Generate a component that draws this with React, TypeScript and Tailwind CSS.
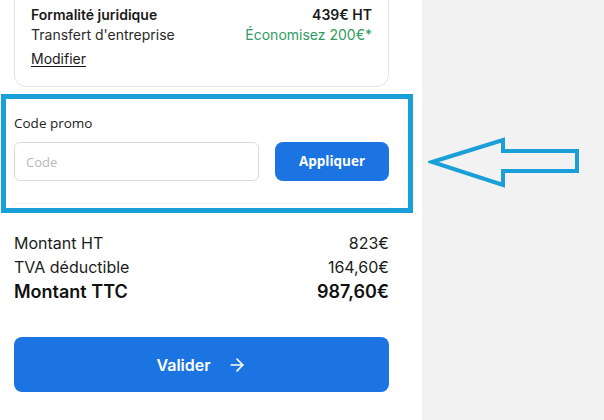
import { ArrowRight } from 'lucide-react';

function Row({ label, value, strong }: { label: string; value: string; strong?: boolean }) {
  return (
    <div
      className={
        strong
          ? 'flex items-center justify-between text-[18px] leading-[26px] font-semibold text-[#111]'
          : 'flex items-center justify-between text-[16px] leading-[24px] text-[#1c1c1c]'
      }
    >
      <span>{label}</span>
      <span>{value}</span>
    </div>
  );
}

export default function App() {
  return (
    <div className="flex h-[420px] w-[604px] overflow-hidden bg-[#f2f2f2] font-['Inter',sans-serif]">
      {/* Order summary column */}
      <div className="w-[422px] shrink-0 bg-white pl-[14px] pr-[33px]">
        {/* Product card (top cut off) */}
        <div className="-mt-[12px] rounded-xl border border-[#e3e3e3] px-4 pt-4 pb-4">
          <div className="flex items-center justify-between text-[14px] leading-[20px] font-semibold text-[#1a1a1a]">
            <span>Formalité juridique</span>
            <span>439€ HT</span>
          </div>
          <div className="flex items-center justify-between text-[14px] leading-[20px] text-[#2a2a2a]">
            <span>Transfert d'entreprise</span>
            <span className="text-[#2f9a62]">Économisez 200€*</span>
          </div>
          <a className="mt-1 inline-block text-[14px] leading-[20px] text-[#1a1a1a] underline underline-offset-2">
            Modifier
          </a>
        </div>

        {/* Promo code */}
        <div className="relative mt-3 border-b border-[#f0f0f0] pt-[15px] pb-[22px] font-['Open_Sans',sans-serif]">
          <div className="text-[13.5px] leading-[18px] text-[#222]">Code promo</div>
          <div className="mt-[10px] flex gap-4">
            <input
              placeholder="Code"
              className="h-[39px] w-[245px] rounded-md border border-[#dadada] px-[11px] text-[13px] text-[#222] outline-none placeholder:text-[#b8b8b8]"
            />
            <button className="h-[39px] flex-1 rounded-lg bg-[#1b74e2] text-[13.5px] font-bold text-white">
              Appliquer
            </button>
          </div>
          {/* annotation frame */}
          <div className="pointer-events-none absolute -top-[5px] -right-[24px] -bottom-[10px] -left-[13px] border-[5px] border-[#1a9fd9]" />
        </div>

        {/* Totals */}
        <div className="mt-[27px]">
          <Row label="Montant HT" value="823€" />
          <Row label="TVA déductible" value="164,60€" />
          <Row label="Montant TTC" value="987,60€" strong />
        </div>

        <button className="mt-[32px] flex h-[55px] w-full items-center justify-center gap-4 rounded-lg bg-[#1b74e2] text-[16px] font-semibold text-white">
          <span>Valider</span>
          <ArrowRight className="h-5 w-5" strokeWidth={2} />
        </button>
      </div>

      {/* Annotation arrow */}
      <div className="flex-1 pt-[137px] pl-[6px]">
        <svg width="154" height="52" viewBox="0 0 154 52" fill="none">
          <path
            d="M4 25 L75 3 L75 14 L149 14 L149 34 L75 34 L75 48 Z"
            stroke="#1a9fd9"
            strokeWidth="4"
            strokeLinejoin="miter"
          />
        </svg>
      </div>
    </div>
  );
}
